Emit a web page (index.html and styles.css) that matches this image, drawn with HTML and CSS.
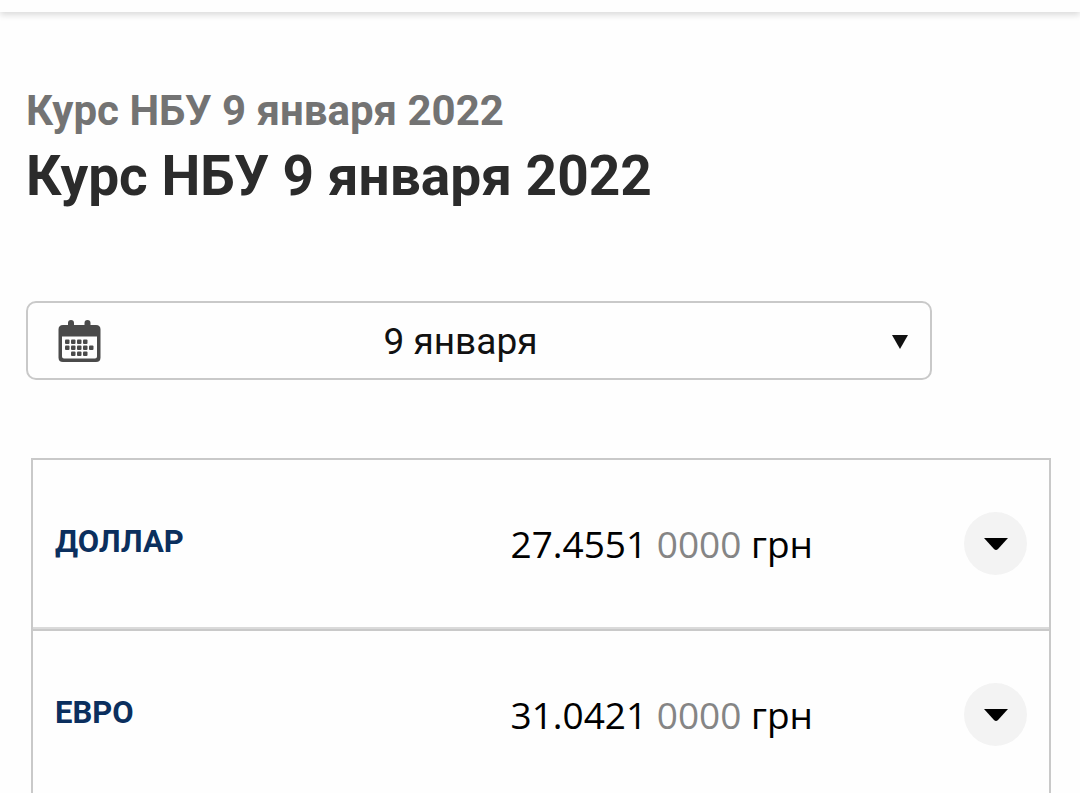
FILE: index.html
```html
<!DOCTYPE html>
<html lang="ru">
<head>
<meta charset="utf-8">
<meta name="viewport" content="width=device-width, initial-scale=1">
<title>Курс НБУ 9 января 2022</title>
<link rel="stylesheet" href="styles.css">
</head>
<body>
<header class="topbar"></header>
<main class="page">
  <p class="crumb">Курс НБУ 9 января 2022</p>
  <h1 class="title">Курс НБУ 9 января 2022</h1>

  <div class="date-picker">
    <svg class="calendar" viewBox="0 0 43 43" aria-hidden="true">
      <path fill="#4a4a4a" fill-rule="evenodd" d="M5 5H10V3Q10 0 13 0T16 3V5H26.500V3Q26.500 0 29.500 0T32.500 3V5H38Q42.500 5 42.500 9.500V37.500Q42.500 42 38 42H5Q.5 42 .5 37.500V9.500Q.5 5 5 5ZM4 16.500V36.500Q4 38.500 6 38.500H37Q39 38.500 39 36.500V16.500Z"/>
      <g fill="#4a4a4a">
        <rect x="7" y="19.500" width="4.500" height="4.500" rx="1"/>
        <rect x="13" y="19.500" width="4.500" height="4.500" rx="1"/>
        <rect x="19" y="19.500" width="4.500" height="4.500" rx="1"/>
        <rect x="25" y="19.500" width="4.500" height="4.500" rx="1"/>
        <rect x="7" y="25.500" width="4.500" height="4.500" rx="1"/>
        <rect x="13" y="25.500" width="4.500" height="4.500" rx="1"/>
        <rect x="19" y="25.500" width="4.500" height="4.500" rx="1"/>
        <rect x="25" y="25.500" width="4.500" height="4.500" rx="1"/>
        <rect x="31" y="25.500" width="4.500" height="4.500" rx="1"/>
        <rect x="13" y="31.500" width="4.500" height="4.500" rx="1"/>
        <rect x="19" y="31.500" width="4.500" height="4.500" rx="1"/>
        <rect x="25" y="31.500" width="4.500" height="4.500" rx="1"/>
      </g>
    </svg>
    <select class="date-select" aria-label="Дата">
      <option>9 января</option>
    </select>
    <svg class="date-arrow" viewBox="0 0 16 14" aria-hidden="true"><path fill="#111" d="M0 0H16L8 14Z"/></svg>
  </div>

  <table class="rates">
    <tbody>
      <tr>
        <th class="name" scope="row">ДОЛЛАР</th>
        <td class="value">27.4551 <span class="muted">0000</span> грн</td>
        <td class="action">
          <button class="toggle" type="button" aria-label="Подробнее: доллар">
            <svg class="caret" viewBox="0 0 24 12" aria-hidden="true"><path d="M0 0H24L14 11Q12 13 10 11Z"/></svg>
          </button>
        </td>
      </tr>
      <tr>
        <th class="name" scope="row">ЕВРО</th>
        <td class="value">31.0421 <span class="muted">0000</span> грн</td>
        <td class="action">
          <button class="toggle" type="button" aria-label="Подробнее: евро">
            <svg class="caret" viewBox="0 0 24 12" aria-hidden="true"><path d="M0 0H24L14 11Q12 13 10 11Z"/></svg>
          </button>
        </td>
      </tr>
    </tbody>
  </table>
</main>
</body>
</html>
```
FILE: styles.css
```css
* {
  box-sizing: border-box;
}

body {
  margin: 0;
  height: 100vh;
  overflow: hidden;
  background: #fefefe;
  font-family: Roboto, "Liberation Sans", sans-serif;
}

.topbar {
  height: 12px;
  background: #fefefe;
  box-shadow: 0 3px 6px rgba(0, 0, 0, 0.14);
}

.page {
  padding: 73px 29px 0 26px;
}

.crumb {
  margin: 0;
  color: #737373;
  font-size: 42px;
  font-weight: 700;
  line-height: 52px;
}

.title {
  margin: 7px 0 0;
  color: #2b2b2b;
  font-size: 55px;
  font-weight: 700;
  line-height: 64px;
}

.date-picker {
  display: flex;
  align-items: center;
  width: calc(100% - 119px);
  height: 79px;
  margin-top: 93px;
  padding: 2px 22px 0 30px;
  border: 2px solid #c9c9c9;
  border-radius: 10px;
}

.calendar {
  flex: none;
  width: 43px;
  height: 43px;
}

.date-select {
  flex: 1;
  height: 100%;
  padding: 0 72px 0 0;
  border: 0;
  background: transparent;
  color: #111;
  font: 400 37px Roboto, "Liberation Sans", sans-serif;
  text-align: center;
  text-align-last: center;
  appearance: none;
}

.date-arrow {
  flex: none;
  width: 16px;
  height: 14px;
}

.rates {
  width: calc(100% - 5px);
  margin: 78px 0 0 5px;
  border: 2px solid #c9c9c9;
  border-spacing: 0;
}

.rates th,
.rates td {
  height: 171px;
  border-bottom: 2px solid #c9c9c9;
  box-shadow: inset 0 -2px #dadada;
  vertical-align: middle;
}

.rates .name {
  width: 47%;
  padding: 0 0 6px 22px;
  color: #0b2f5e;
  font-size: 31px;
  font-weight: 700;
  text-align: left;
}

.rates .value {
  padding: 0 0 2px;
  color: #000;
  font-family: "Open Sans", "Noto Sans", sans-serif;
  font-size: 37px;
  white-space: nowrap;
}

.muted {
  color: #858585;
}

.rates .action {
  width: 85px;
  padding: 0 22px 2px 0;
}

.toggle {
  display: grid;
  place-items: center;
  width: 63px;
  height: 63px;
  padding: 0;
  border: 0;
  border-radius: 50%;
  background: #f3f3f3;
}

.caret {
  width: 24px;
  height: 12px;
}
```
